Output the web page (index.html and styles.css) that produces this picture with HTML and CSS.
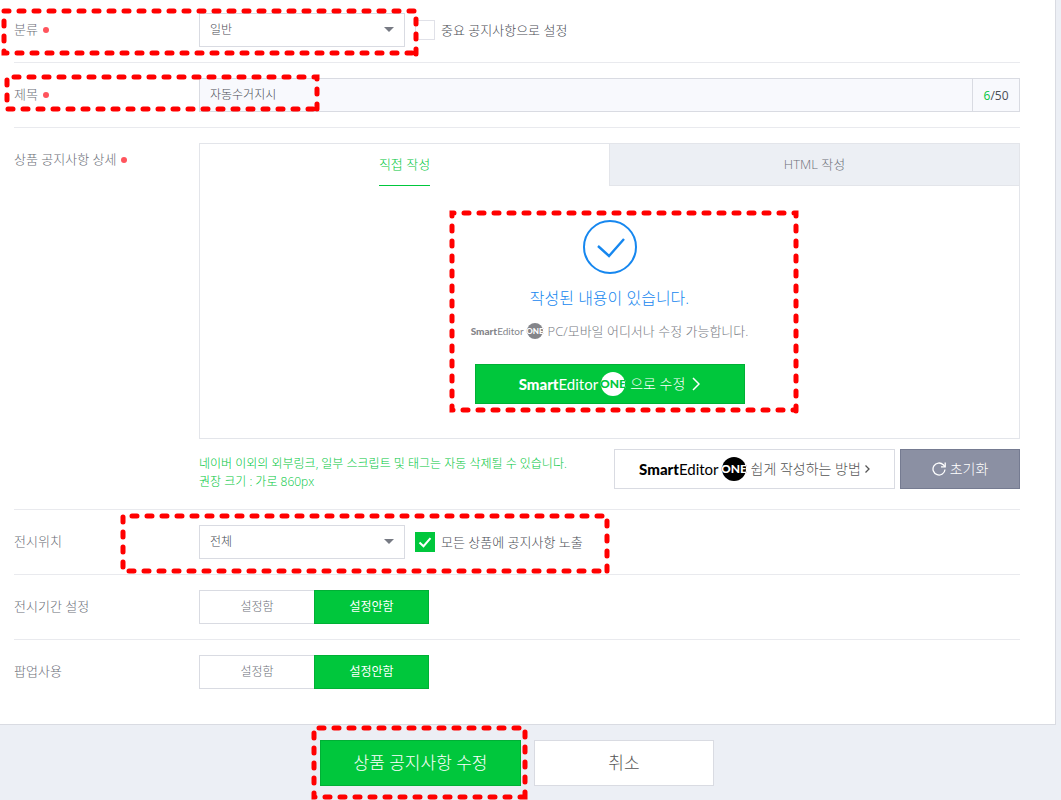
FILE: index.html
```html
<!DOCTYPE html>
<html lang="ko">
<head>
  <meta charset="UTF-8" />
  <meta name="viewport" content="width=device-width, initial-scale=1.0"/>
  <title>상품 공지사항 수정</title>
  <link rel="stylesheet" href="styles.css">
</head>
<body>

  <svg class="symbols" aria-hidden="true">
    <symbol id="one" viewBox="0 0 26 24">
      <clipPath id="one-clip"><circle cx="13" cy="12" r="12"/></clipPath>
      <text class="one-text" x="0" y="16" fill="currentColor">ONE</text>
      <circle cx="13" cy="12" r="12" fill="currentColor"/>
      <text class="one-text one-inner" x="0" y="16" clip-path="url(#one-clip)">ONE</text>
    </symbol>
  </svg>

  <form class="page">
    <main class="panel">
      <div class="row">
        <label class="row-label required" for="category">분류</label>
        <div class="field">
          <div class="select">
            <select id="category">
              <option>일반</option>
            </select>
          </div>
          <label class="check"><input type="checkbox">중요 공지사항으로 설정</label>
        </div>
      </div>

      <div class="row">
        <label class="row-label required" for="title">제목</label>
        <div class="title-box">
          <input type="text" id="title" value="자동수거지시" maxlength="50">
          <span class="count"><em>6</em>/50</span>
        </div>
      </div>

      <div class="row row-detail">
        <span class="row-label required">상품 공지사항 상세</span>
        <div class="detail">
          <div class="editor">
            <div class="tabs" role="tablist">
              <button type="button" class="tab active" role="tab" aria-selected="true"><span>직접 작성</span></button>
              <button type="button" class="tab" role="tab" aria-selected="false"><span>HTML 작성</span></button>
            </div>
            <div class="editor-body">
              <svg class="done-icon" viewBox="0 0 54 54" fill="none" stroke="currentColor" aria-hidden="true">
                <circle cx="27" cy="27" r="26" stroke-width="2"/>
                <path d="M15 26 L26 36 L41 19" stroke-width="2.4"/>
              </svg>
              <p class="done-text">작성된 내용이 있습니다.</p>
              <p class="done-sub">
                <span class="logo logo-small"><b>Smart</b>Editor<svg class="one"><use href="#one"/></svg></span>
                PC/모바일 어디서나 수정 가능합니다.
              </p>
              <button type="button" class="btn-edit">
                <span class="logo"><b>Smart</b>Editor<svg class="one"><use href="#one"/></svg></span>
                으로 수정
                <svg class="chevron" viewBox="0 0 8 14" fill="none" stroke="currentColor" stroke-width="1.5"><path d="M1 1 L7 7 L1 13"/></svg>
              </button>
            </div>
          </div>
          <div class="tools">
            <p class="notice">네이버 이외의 외부링크, 일부 스크립트 및 태그는 자동 삭제될 수 있습니다.<br>권장 크기 : 가로 860px</p>
            <button type="button" class="btn-guide">
              <span class="logo"><b>Smart</b>Editor<svg class="one"><use href="#one"/></svg></span>
              쉽게 작성하는 방법
              <svg class="chevron-small" viewBox="0 0 5 8" fill="none" stroke="currentColor" stroke-width="1.3"><path d="M0.5 0.5 L4 4 L0.5 7.5"/></svg>
            </button>
            <button type="button" class="btn-reset">
              <svg class="reset-icon" viewBox="0 0 14 14" fill="none" stroke="currentColor" stroke-width="1.3"><path d="M13 7.5 A6 6 0 1 1 11.3 2.8 L13 4.6"/><path d="M13.2 0.5 V4.8 H9"/></svg>
              초기화
            </button>
          </div>
        </div>
      </div>

      <div class="row">
        <label class="row-label" for="position">전시위치</label>
        <div class="field">
          <div class="select">
            <select id="position">
              <option>전체</option>
            </select>
          </div>
          <label class="check"><input type="checkbox" checked>모든 상품에 공지사항 노출</label>
        </div>
      </div>

      <div class="row">
        <span class="row-label">전시기간 설정</span>
        <div class="toggle">
          <button type="button" aria-pressed="false">설정함</button>
          <button type="button" class="on" aria-pressed="true">설정안함</button>
        </div>
      </div>

      <div class="row">
        <span class="row-label">팝업사용</span>
        <div class="toggle">
          <button type="button" aria-pressed="false">설정함</button>
          <button type="button" class="on" aria-pressed="true">설정안함</button>
        </div>
      </div>
    </main>

    <div class="actions">
      <button type="button" class="btn-submit">상품 공지사항 수정</button>
      <button type="button" class="btn-cancel">취소</button>
    </div>
  </form>

  <!-- Guide marks -->
  <svg class="marks" width="810" height="800" aria-hidden="true">
    <path d="M416 54 V11 H4 V53 H416"/>
    <path d="M317 109 V77 H7 V109 Z"/>
    <path d="M796 411 V213 H452 V410 H796"/>
    <path d="M607 571 V516 H123 V571 Z"/>
    <path d="M525 797 V728 H314 V797 Z"/>
  </svg>

</body>
</html>
```

FILE: styles.css
```css
* {
  box-sizing: border-box;
}

body {
  margin: 0;
  background: #eceff5;
  color: #4a4d55;
  font-family: "Open Sans", "Noto Sans CJK KR", sans-serif;
  font-size: 13px;
  font-weight: 300;
  line-height: 18px;
}

p {
  margin: 0;
}

button,
input,
select {
  font: inherit;
  color: inherit;
  border-radius: 0;
}

button {
  padding: 0;
  cursor: pointer;
}

.symbols {
  display: none;
}

.panel {
  margin-right: 5px;
  padding: 0 35px 20px 14px;
  background: #fff;
  border-right: 1px solid #d9dbe2;
  border-bottom: 1px solid #d9dbe2;
}

.row {
  display: grid;
  grid-template-columns: 185px 1fr;
  padding: 15px 0;
  border-bottom: 1px solid #e9eaee;
}

.row:first-child {
  padding-top: 13px;
}

.row:last-child {
  border-bottom: 0;
}

.row-detail {
  padding-bottom: 18px;
}

.row-label {
  color: #6c6f78;
  line-height: 32px;
}

.required::after {
  content: "";
  display: inline-block;
  width: 6px;
  height: 6px;
  margin-left: 5px;
  border-radius: 50%;
  background: #ff545d;
  vertical-align: 1px;
}

.field {
  display: flex;
  align-items: center;
  gap: 10px;
}

.select {
  position: relative;
  width: 206px;
}

.select::after {
  content: "";
  position: absolute;
  top: 14px;
  right: 11px;
  border: 5px solid transparent;
  border-top-color: #777a83;
  border-bottom: 0;
  pointer-events: none;
}

.select select {
  appearance: none;
  display: block;
  width: 100%;
  height: 34px;
  padding: 0 10px;
  border: 1px solid #d9dbe2;
  background: #fff;
  font-size: 12px;
}

.check {
  display: flex;
  align-items: center;
  gap: 6px;
}

.check input {
  appearance: none;
  width: 20px;
  height: 20px;
  margin: 0;
  border: 1px solid #e0e1e8;
  background: #fff;
}

.check input:checked {
  border-color: #00c73c;
  background: #00c73c url("data:image/svg+xml,%3Csvg xmlns='http://www.w3.org/2000/svg' viewBox='0 0 18 18' fill='none' stroke='white' stroke-width='2'%3E%3Cpath d='M3.5 9.5 L7.5 13.2 L14.5 5.2'/%3E%3C/svg%3E") center / 18px no-repeat;
}

.title-box {
  display: flex;
  height: 34px;
  border: 1px solid #d9dbe2;
}

.title-box input {
  flex: 1;
  min-width: 0;
  padding: 0 10px;
  border: 0;
  background: #f8f9fd;
  font-size: 12px;
}

.count {
  width: 47px;
  border-left: 1px solid #d9dbe2;
  background: #f8f9fd;
  font-weight: 400;
  font-size: 12px;
  line-height: 34px;
  text-align: center;
}

.count em {
  color: #00c73c;
  font-style: normal;
}

.editor {
  border: 1px solid #e3e5ea;
}

.tabs {
  display: flex;
}

.tab {
  flex: 1;
  height: 42px;
  border: 0;
  border-left: 1px solid #e3e5ea;
  border-bottom: 1px solid #e3e5ea;
  background: #eceff4;
  color: #6c6f78;
}

.tab.active {
  border: 0;
  background: #fff;
  color: #00c73c;
}

.tab span {
  display: inline-block;
  line-height: 41px;
}

.tab.active span {
  border-bottom: 1px solid #00c73c;
}

.editor-body {
  display: flex;
  flex-direction: column;
  align-items: center;
  padding: 34px 0;
}

.done-icon {
  width: 54px;
  height: 54px;
  color: #1687ef;
}

.done-text {
  margin-top: 12px;
  color: #1687ef;
  font-size: 16px;
  line-height: 24px;
}

.done-sub {
  display: flex;
  align-items: center;
  gap: 4px;
  margin-top: 12px;
  color: #777a83;
}

.logo {
  display: flex;
  align-items: center;
  font-family: Lato, sans-serif;
  font-size: 15px;
  font-weight: 400;
}

.logo b {
  font-weight: 900;
}

.one {
  width: 26px;
  height: 24px;
  margin-left: 2px;
  overflow: visible;
}

.one-text {
  font-family: Lato, sans-serif;
  font-size: 12px;
  font-weight: 900;
}

.one-inner {
  fill: var(--one-ink, #fff);
}

.logo-small {
  color: #84858a;
  font-size: 10px;
}

.logo-small .one {
  width: 18px;
  height: 16px;
}

.btn-edit,
.btn-guide,
.btn-reset {
  display: flex;
  align-items: center;
  justify-content: center;
  gap: 4px;
  height: 40px;
  font-size: 14px;
}

.btn-edit {
  --one-ink: #00c73c;
  width: 270px;
  margin-top: 24px;
  border: 1px solid #00b035;
  background: #00c73c;
  color: #fff;
}

.chevron {
  width: 8px;
  height: 14px;
  margin-left: 3px;
}

.tools {
  display: flex;
  align-items: flex-start;
  gap: 5px;
  margin-top: 10px;
}

.notice {
  flex: 1;
  padding-top: 6px;
  color: #00c73c;
  font-size: 12px;
}

.btn-guide {
  width: 281px;
  border: 1px solid #d9dbe2;
  background: #fff;
  color: #555;
}

.btn-guide .logo {
  color: #000;
}

.chevron-small {
  width: 5px;
  height: 8px;
}

.btn-reset {
  width: 120px;
  border: 1px solid #757b91;
  background: #8b90a3;
  color: #fff;
}

.reset-icon {
  width: 14px;
  height: 14px;
}

.toggle {
  display: flex;
}

.toggle button {
  width: 115px;
  height: 34px;
  border: 1px solid #d9dbe2;
  background: #fff;
  color: #6c6f78;
  font-size: 12px;
}

.toggle button:first-child {
  border-right: 0;
}

.toggle .on {
  border-color: #00b035;
  background: #00c73c;
  color: #fff;
  font-weight: 400;
}

.actions {
  display: flex;
  justify-content: center;
  gap: 13px;
  padding: 15px 27px 14px 0;
}

.actions button {
  height: 46px;
  font-size: 17px;
}

.btn-submit {
  width: 201px;
  border: 1px solid #00b035;
  background: #00c73c;
  color: #fff;
}

.btn-cancel {
  width: 180px;
  border: 1px solid #d9dbe2;
  background: #fff;
  color: #555;
}

.marks {
  position: absolute;
  top: 0;
  left: 0;
  fill: none;
  stroke: #f00;
  stroke-width: 5;
  stroke-linecap: round;
  stroke-dasharray: 5 10;
  pointer-events: none;
}
```
